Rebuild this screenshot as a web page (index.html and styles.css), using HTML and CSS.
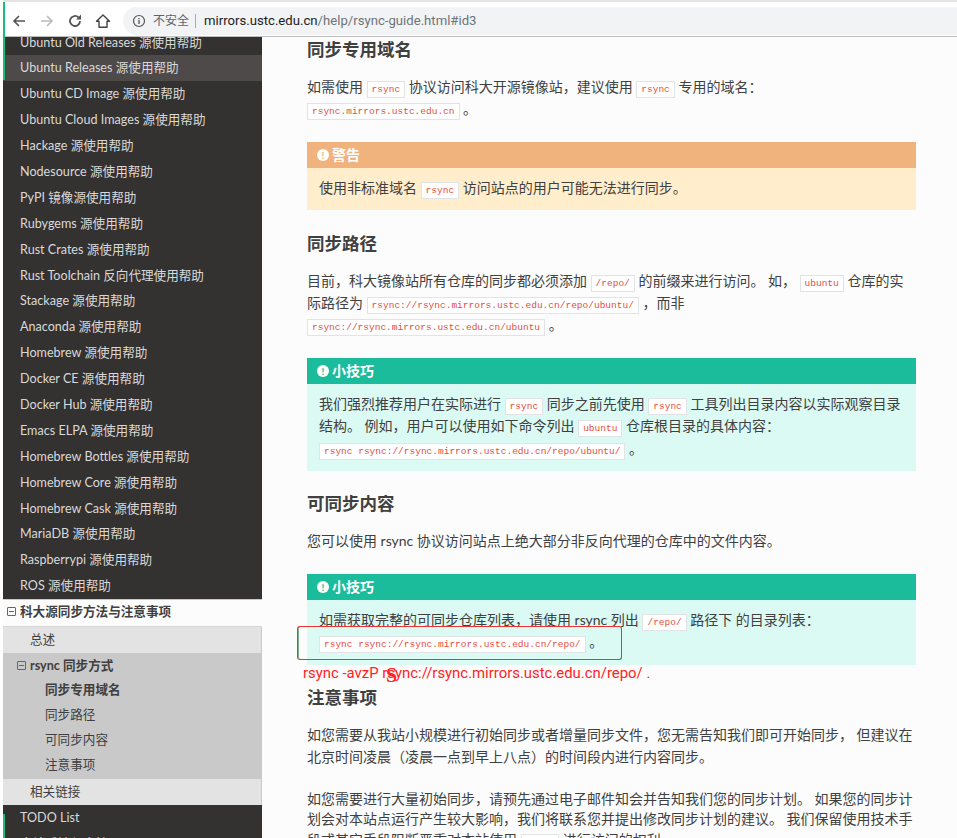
FILE: index.html
```html
<!DOCTYPE html>
<html lang="zh-CN">
<head>
    <meta charset="UTF-8">
    <title>rsync guide</title>
    <link rel="stylesheet" href="styles.css">
</head>
<body>
    <header class="toolbar">
        <svg class="nav-icon" viewBox="0 0 16 16"><path d="M14 8H3M8 3L3 8l5 5" fill="none" stroke="#555" stroke-width="1.6"/></svg>
        <svg class="nav-icon" viewBox="0 0 16 16"><path d="M2 8h11M8 3l5 5-5 5" fill="none" stroke="#bbb" stroke-width="1.6"/></svg>
        <svg class="nav-icon" viewBox="0 0 16 16"><path d="M13 8a5 5 0 1 1-1.500-3.600" fill="none" stroke="#555" stroke-width="1.800"/><path d="M14 1.500v5h-5z" fill="#555"/></svg>
        <svg class="nav-icon" viewBox="0 0 16 16"><path d="M8 2L1.500 8.200H4v6h8v-6h2.500z" fill="none" stroke="#444" stroke-width="1.400" stroke-linejoin="round"/></svg>
        <div class="address">
            <svg class="info-icon" viewBox="0 0 14 14"><circle cx="7" cy="7" r="5.500" fill="none" stroke="#555" stroke-width="1.200"/><path d="M7 6v4M7 4v1.200" stroke="#555" stroke-width="1.300"/></svg>
            <span class="insecure">不安全</span>
            <span class="url"><b>mirrors.ustc.edu.cn</b>/help/rsync-guide.html#id3</span>
        </div>
    </header>

    <div class="page">
        <nav class="sidebar">
            <ul class="menu menu-top">
                <li>Ubuntu Old Releases 源使用帮助</li>
                <li class="active">Ubuntu Releases 源使用帮助</li>
                <li>Ubuntu CD Image 源使用帮助</li>
                <li>Ubuntu Cloud Images 源使用帮助</li>
                <li>Hackage 源使用帮助</li>
                <li>Nodesource 源使用帮助</li>
                <li>PyPI 镜像源使用帮助</li>
                <li>Rubygems 源使用帮助</li>
                <li>Rust Crates 源使用帮助</li>
                <li>Rust Toolchain 反向代理使用帮助</li>
                <li>Stackage 源使用帮助</li>
                <li>Anaconda 源使用帮助</li>
                <li>Homebrew 源使用帮助</li>
                <li>Docker CE 源使用帮助</li>
                <li>Docker Hub 源使用帮助</li>
                <li>Emacs ELPA 源使用帮助</li>
                <li>Homebrew Bottles 源使用帮助</li>
                <li>Homebrew Core 源使用帮助</li>
                <li>Homebrew Cask 源使用帮助</li>
                <li>MariaDB 源使用帮助</li>
                <li>Raspberrypi 源使用帮助</li>
                <li>ROS 源使用帮助</li>
            </ul>
            <div class="current">
                <div class="current-title"><span class="toggle"></span>科大源同步方法与注意事项</div>
                <div class="sub-item">总述</div>
                <div class="sub-group">
                    <div class="sub-title"><span class="toggle"></span>rsync 同步方式</div>
                    <div class="leaf leaf-on">同步专用域名</div>
                    <div class="leaf">同步路径</div>
                    <div class="leaf">可同步内容</div>
                    <div class="leaf">注意事项</div>
                </div>
                <div class="sub-item">相关链接</div>
            </div>
            <ul class="menu">
                <li>TODO List</li>
                <li>本站反馈与支持</li>
            </ul>
        </nav>

        <main class="content">
            <h2>同步专用域名</h2>
            <p>如需使用 <code>rsync</code> 协议访问科大开源镜像站，建议使用 <code>rsync</code> 专用的域名：<br><code>rsync.mirrors.ustc.edu.cn</code> 。</p>
            <div class="note warning">
                <div class="note-title"><span class="bang">!</span>警告</div>
                <div class="note-body">使用非标准域名 <code>rsync</code> 访问站点的用户可能无法进行同步。</div>
            </div>

            <h2>同步路径</h2>
            <p>目前，科大镜像站所有仓库的同步都必须添加 <code>/repo/</code> 的前缀来进行访问。 如， <code>ubuntu</code> 仓库的实际路径为 <code>rsync://rsync.mirrors.ustc.edu.cn/repo/ubuntu/</code> ，而非 <code>rsync://rsync.mirrors.ustc.edu.cn/ubuntu</code> 。</p>
            <div class="note tip">
                <div class="note-title"><span class="bang">!</span>小技巧</div>
                <div class="note-body">我们强烈推荐用户在实际进行 <code>rsync</code> 同步之前先使用 <code>rsync</code> 工具列出目录内容以实际观察目录结构。 例如，用户可以使用如下命令列出 <code>ubuntu</code> 仓库根目录的具体内容： <code>rsync rsync://rsync.mirrors.ustc.edu.cn/repo/ubuntu/</code> 。</div>
            </div>

            <h2>可同步内容</h2>
            <p>您可以使用 rsync 协议访问站点上绝大部分非反向代理的仓库中的文件内容。</p>
            <div class="note tip">
                <div class="note-title"><span class="bang">!</span>小技巧</div>
                <div class="note-body">如需获取完整的可同步仓库列表，请使用 rsync 列出 <code>/repo/</code> 路径下 的目录列表： <code>rsync rsync://rsync.mirrors.ustc.edu.cn/repo/</code> 。</div>
            </div>

            <h2>注意事项</h2>
            <p class="before-tight">如您需要从我站小规模进行初始同步或者增量同步文件，您无需告知我们即可开始同步， 但建议在北京时间凌晨（凌晨一点到早上八点）的时间段内进行内容同步。</p>
            <p class="tight">如您需要进行大量初始同步，请预先通过电子邮件知会并告知我们您的同步计划。 如果您的同步计划会对本站点运行产生较大影响，我们将联系您并提出修改同步计划的建议。 我们保留使用技术手段或其它手段阻断严重对本站使用 <code>rsync</code> 进行访问的权利。</p>
        </main>
    </div>

    <div class="edge edge-top"></div>
    <div class="edge edge-bottom"></div>
    <div class="mark-box"></div>
    <div class="mark-text">rsync -avzP rsync://rsync.mirrors.ustc.edu.cn/repo/ .</div>
    <div class="mark-s">S</div>
</body>
</html>
```

FILE: styles.css
```css
* {
    box-sizing: border-box;
    margin: 0;
    padding: 0;
}

html, body {
    height: 100%;
    overflow: hidden;
}

body {
    font-family: Lato, "Noto Sans CJK SC", sans-serif;
    background: #fff;
    color: #404040;
    display: flex;
    flex-direction: column;
    position: relative;
}

.toolbar {
    height: 37px;
    flex-shrink: 0;
    margin-left: 3px;
    display: flex;
    align-items: center;
    gap: 12px;
    padding: 3px 0 0 8px;
    background: #fff;
    border-top: 2px solid #e4e4e4;
    border-bottom: 1px solid #bdbdbd;
}

.nav-icon {
    width: 16px;
    height: 16px;
}

.address {
    flex: 1;
    height: 28px;
    padding-left: 9px;
    display: flex;
    align-items: center;
    background: #f1f3f4;
    border-radius: 14px 0 0 14px;
}

.info-icon {
    width: 14px;
    height: 14px;
}

.insecure {
    color: #5f6368;
    font-size: 12px;
    margin-left: 7px;
    padding-right: 6px;
    border-right: 1px solid #aaa;
    line-height: 14px;
}

.url {
    margin-left: 8px;
    color: #6f7478;
    font-family: Roboto, sans-serif;
    font-size: 13.150px;
}

.url b {
    font-weight: 400;
    color: #222;
}

.page {
    flex: 1;
    min-height: 0;
    display: flex;
    padding-left: 3px;
    overflow: hidden;
}

.sidebar {
    width: 259px;
    flex-shrink: 0;
    background: #343131;
    color: #d9d9d9;
    font-size: 12.600px;
    overflow: hidden;
}

.menu {
    list-style: none;
}

.menu-top {
    margin-top: -7.500px;
}

.menu li {
    height: 25.900px;
    line-height: 25.900px;
    padding-left: 17px;
    white-space: nowrap;
}

.menu .active {
    background: #4e4a4a;
}

.current {
    color: #404040;
    background: #e3e3e3;
}

.current-title {
    height: 28px;
    line-height: 20px;
    background: #fcfcfc;
    border-top: 1px solid #c9c9c9;
    border-bottom: 1px solid #d6d6d6;
    padding: 0 0 3px 4px;
    font-weight: 700;
    display: flex;
    align-items: center;
}

.toggle {
    width: 9px;
    height: 9px;
    border: 1px solid #666;
    border-radius: 1px;
    margin-right: 4px;
    background: linear-gradient(#666, #666) center / 5px 1px no-repeat;
}

.sub-item {
    height: 26px;
    line-height: 25px;
    padding-left: 27px;
    border-right: 1px solid #c9c9c9;
}

.sub-group {
    background: #c9c9c9;
    padding-bottom: 1px;
}

.sub-title {
    height: 25px;
    line-height: 22px;
    padding-left: 14px;
    font-weight: 700;
    display: flex;
    align-items: center;
}

.leaf {
    height: 25px;
    line-height: 23px;
    padding-left: 42px;
}

.leaf-on {
    font-weight: 700;
}

.content {
    flex: 1;
    min-width: 0;
    background: #fcfcfc;
    padding: 0 41px 0 45px;
    font-size: 14px;
    line-height: 22.400px;
}

h2 {
    font-size: 17.500px;
    font-weight: 700;
    line-height: 24px;
    margin-bottom: 14px;
}

.content > h2:first-child {
    padding-top: 1px;
}

p {
    margin-bottom: 21.400px;
}

.before-tight {
    margin-bottom: 20px;
}

.tight {
    line-height: 20.500px;
}

code {
    font-family: "Liberation Mono", monospace;
    font-size: 9.500px;
    line-height: 1;
    color: #e74c3c;
    background: #fff;
    border: 1px solid #e1e4e5;
    padding: 2px 4px;
    white-space: nowrap;
}

.note {
    margin-bottom: 21.500px;
}

.note-title {
    height: 25.500px;
    line-height: 22px;
    padding-left: 10px;
    color: #fff;
    font-weight: 700;
    display: flex;
    align-items: center;
}

.bang {
    width: 12px;
    height: 12px;
    border-radius: 50%;
    background: #fff;
    font-size: 10px;
    line-height: 12px;
    text-align: center;
    margin-right: 3px;
}

.note-body {
    padding: 9px 12px 11px;
}

.warning .note-title {
    background: #f0b37e;
}

.warning .bang {
    color: #f0b37e;
}

.warning .note-body {
    background: #ffedcc;
}

.tip .note-title {
    background: #1abc9c;
}

.tip .bang {
    color: #1abc9c;
}

.tip .note-body {
    background: #dbfaf4;
}

.edge {
    position: absolute;
    left: 3px;
    width: 2px;
    background: #1abc7c;
}

.edge-top {
    top: 2px;
    height: 78px;
}

.edge-bottom {
    top: 814px;
    bottom: 0;
}

.mark-box {
    position: absolute;
    left: 297px;
    top: 626px;
    width: 325px;
    height: 34px;
    border: 1px solid #3d8b40;
    border-left-color: #e33;
    border-top-color: #e33;
    border-radius: 3px;
    box-shadow: inset 1px 0 0 #7fb58a;
}

.mark-text {
    position: absolute;
    left: 303px;
    top: 664px;
    font-family: Roboto, sans-serif;
    font-size: 14.900px;
    line-height: 18px;
    color: #f22;
    white-space: nowrap;
}

.mark-s {
    position: absolute;
    left: 386px;
    top: 664px;
    font-family: "Liberation Serif", serif;
    font-weight: 700;
    font-size: 20px;
    line-height: 22px;
    color: #f22;
}
```
